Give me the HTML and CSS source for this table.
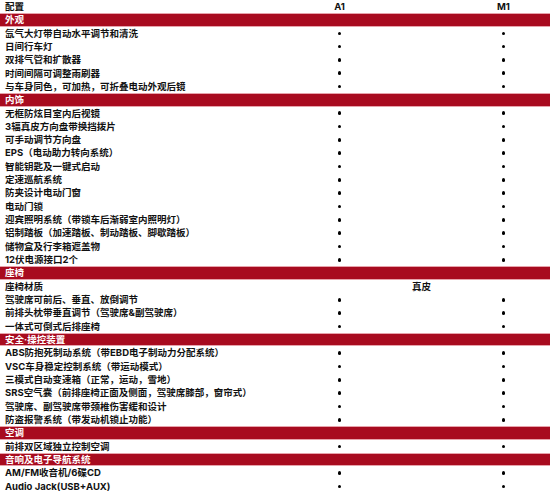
FILE: index.html
```html
<!DOCTYPE html>
<html lang="zh">
<head>
<meta charset="utf-8">
<link rel="stylesheet" href="styles.css">
</head>
<body>
<div class="table">
  <div class="row head"><span class="label">配置</span><span class="c1">A1</span><span class="c2">M1</span></div>
  <div class="row band"><span class="label">外观</span></div>
  <div class="row"><span class="label">氙气大灯带自动水平调节和清洗</span><span class="c1"><i class="dot"></i></span><span class="c2"><i class="dot"></i></span></div>
  <div class="row"><span class="label">日间行车灯</span><span class="c1"><i class="dot"></i></span><span class="c2"><i class="dot"></i></span></div>
  <div class="row"><span class="label">双排气管和扩散器</span><span class="c1"><i class="dot"></i></span><span class="c2"><i class="dot"></i></span></div>
  <div class="row"><span class="label">时间间隔可调整雨刷器</span><span class="c1"><i class="dot"></i></span><span class="c2"><i class="dot"></i></span></div>
  <div class="row"><span class="label">与车身同色，可加热，可折叠电动外观后镜</span><span class="c1"><i class="dot"></i></span><span class="c2"><i class="dot"></i></span></div>
  <div class="row band"><span class="label">内饰</span></div>
  <div class="row"><span class="label">无框防炫目室内后视镜</span><span class="c1"><i class="dot"></i></span><span class="c2"><i class="dot"></i></span></div>
  <div class="row"><span class="label">3辐真皮方向盘带换挡拨片</span><span class="c1"><i class="dot"></i></span><span class="c2"><i class="dot"></i></span></div>
  <div class="row"><span class="label">可手动调节方向盘</span><span class="c1"><i class="dot"></i></span><span class="c2"><i class="dot"></i></span></div>
  <div class="row"><span class="label">EPS（电动助力转向系统）</span><span class="c1"><i class="dot"></i></span><span class="c2"><i class="dot"></i></span></div>
  <div class="row"><span class="label">智能钥匙及一键式启动</span><span class="c1"><i class="dot"></i></span><span class="c2"><i class="dot"></i></span></div>
  <div class="row"><span class="label">定速巡航系统</span><span class="c1"><i class="dot"></i></span><span class="c2"><i class="dot"></i></span></div>
  <div class="row"><span class="label">防夹设计电动门窗</span><span class="c1"><i class="dot"></i></span><span class="c2"><i class="dot"></i></span></div>
  <div class="row"><span class="label">电动门锁</span><span class="c1"><i class="dot"></i></span><span class="c2"><i class="dot"></i></span></div>
  <div class="row"><span class="label">迎宾照明系统（带锁车后渐弱室内照明灯）</span><span class="c1"><i class="dot"></i></span><span class="c2"><i class="dot"></i></span></div>
  <div class="row"><span class="label">铝制踏板（加速踏板、制动踏板、脚歇踏板）</span><span class="c1"><i class="dot"></i></span><span class="c2"><i class="dot"></i></span></div>
  <div class="row"><span class="label">储物盒及行李箱遮盖物</span><span class="c1"><i class="dot"></i></span><span class="c2"><i class="dot"></i></span></div>
  <div class="row"><span class="label">12伏电源接口2个</span><span class="c1"><i class="dot"></i></span><span class="c2"><i class="dot"></i></span></div>
  <div class="row band"><span class="label">座椅</span></div>
  <div class="row"><span class="label">座椅材质</span><span class="span">真皮</span></div>
  <div class="row"><span class="label">驾驶席可前后、垂直、放倒调节</span><span class="c1"><i class="dot"></i></span><span class="c2"><i class="dot"></i></span></div>
  <div class="row"><span class="label">前排头枕带垂直调节（驾驶席&amp;副驾驶席）</span><span class="c1"><i class="dot"></i></span><span class="c2"><i class="dot"></i></span></div>
  <div class="row"><span class="label">一体式可倒式后排座椅</span><span class="c1"><i class="dot"></i></span><span class="c2"><i class="dot"></i></span></div>
  <div class="row band"><span class="label">安全·操控装置</span></div>
  <div class="row"><span class="label">ABS防抱死制动系统（带EBD电子制动力分配系统）</span><span class="c1"><i class="dot"></i></span><span class="c2"><i class="dot"></i></span></div>
  <div class="row"><span class="label">VSC车身稳定控制系统（带运动模式）</span><span class="c1"><i class="dot"></i></span><span class="c2"><i class="dot"></i></span></div>
  <div class="row"><span class="label">三模式自动变速箱（正常，运动，雪地）</span><span class="c1"><i class="dot"></i></span><span class="c2"><i class="dot"></i></span></div>
  <div class="row"><span class="label">SRS空气囊（前排座椅正面及侧面，驾驶席膝部，窗帘式）</span><span class="c1"><i class="dot"></i></span><span class="c2"><i class="dot"></i></span></div>
  <div class="row"><span class="label">驾驶席、副驾驶席带颈椎伤害缓和设计</span><span class="c1"><i class="dot"></i></span><span class="c2"><i class="dot"></i></span></div>
  <div class="row"><span class="label">防盗报警系统（带发动机锁止功能）</span><span class="c1"><i class="dot"></i></span><span class="c2"><i class="dot"></i></span></div>
  <div class="row band"><span class="label">空调</span></div>
  <div class="row"><span class="label">前排双区域独立控制空调</span><span class="c1"><i class="dot"></i></span><span class="c2"><i class="dot"></i></span></div>
  <div class="row band"><span class="label">音响及电子导航系统</span></div>
  <div class="row"><span class="label">AM/FM收音机/6碟CD</span><span class="c1"><i class="dot"></i></span><span class="c2"><i class="dot"></i></span></div>
  <div class="row"><span class="label">Audio Jack(USB+AUX)</span><span class="c1"><i class="dot"></i></span><span class="c2"><i class="dot"></i></span></div>
</div>
</body>
</html>
```

FILE: styles.css
```css
html, body {
  margin: 0;
  padding: 0;
  background: #ffffff;
}

.table {
  width: 550px;
  height: 493px;
  display: grid;
  grid-template-rows: repeat(37, 1fr);
  font-family: "Inter", "Noto Sans CJK SC", sans-serif;
  font-size: 9.5px;
  font-weight: 700;
  color: #111111;
  overflow: hidden;
}

.row {
  display: grid;
  grid-template-columns: 297px 85px 79px 85px 4px;
  align-items: center;
  line-height: 1;
  white-space: nowrap;
}

.label {
  grid-column: 1;
  padding-left: 5px;
}

.c1 {
  grid-column: 2;
  display: flex;
  justify-content: center;
}

.c2 {
  grid-column: 4;
  display: flex;
  justify-content: center;
}

.span {
  grid-column: 2 / 5;
  text-align: center;
}

.dot {
  display: block;
  width: 3.6px;
  height: 3.6px;
  border-radius: 50%;
  background: #000;
}

.band {
  background: #a80b1f;
  color: #ffffff;
  border-top: 1px solid #e7a3ab;
  border-bottom: 1px solid #e7a3ab;
  box-sizing: border-box;
}
```
